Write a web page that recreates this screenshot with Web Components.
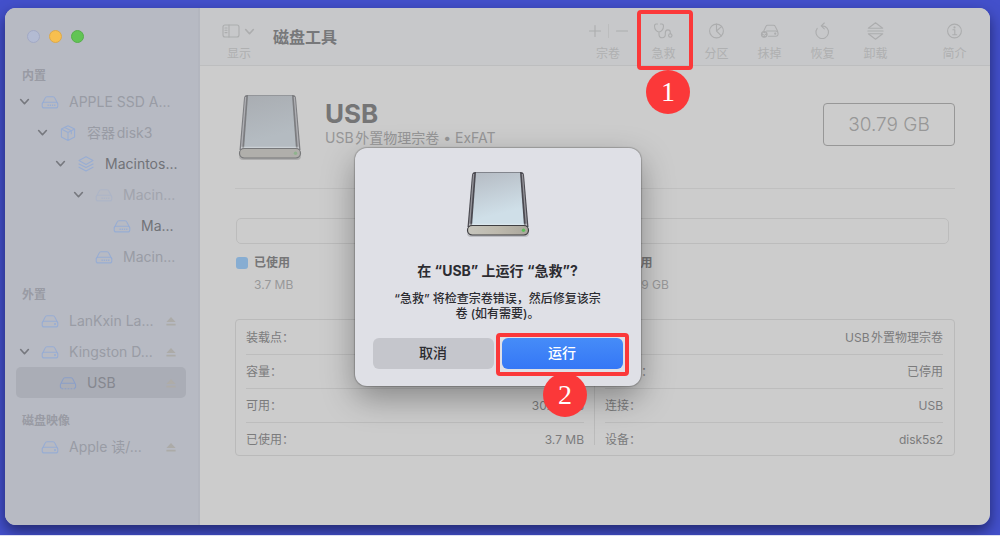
<!DOCTYPE html>
<html lang="zh-CN">
<head>
<meta charset="utf-8">
<title>磁盘工具</title>
<style>
  html, body { margin: 0; }
  body {
    box-sizing: border-box;
    min-height: 100vh;
    padding: 8px 10px 10px 5px;
    border-bottom: 1px solid #dcdff2;
    background: #4350cb;
    overflow: hidden;
    color: #7b7b7c;
    font: 12px/16px Inter, "Noto Sans CJK SC", sans-serif;
    text-autospace: normal;
  }
</style>
</head>
<body>
<disk-utility></disk-utility>

<script>
// Registers an element; {{name}} in its markup is filled from the host's attribute.
const define = (name, html, setup) => {
  customElements.define(name, class extends HTMLElement {
    connectedCallback() {
      if (this.shadowRoot) return;
      const template = document.createElement('template');
      template.innerHTML = html.replace(/\{\{(\w+)\}\}/g, (_, key) => this.getAttribute(key) || '');
      const root = this.attachShadow({ mode: 'open' });
      root.append(template.content);
      if (setup) setup(this, root);
    }
  });
};

const DRIVE = '<path d="M1.4 8.6 4.2 2.9Q4.700 1.700 6 1.700h6q1.300 0 1.800 1.200l2.800 5.700"/><rect x="1.200" y="7.300" width="15.600" height="5.600" rx="2"/>';
const ICONS = {
  chevron: ['0 0 10 10', '<path d="M1.500 3.200 5 7l3.500-3.800"/>'],
  internal: ['0 0 18 14', DRIVE + '<path d="M6.500 10.200h8" stroke-width="1.400" stroke-linecap="butt" stroke-dasharray="1.300 .9"/>'],
  external: ['0 0 18 14', DRIVE + '<circle cx="14" cy="10.100" r=".5"/>'],
  dotted: ['0 0 18 14', '<path d="M1.400 8.600 4.200 2.900Q4.700 1.700 6 1.700h6q1.300 0 1.800 1.200l2.800 5.700v2.400q0 1-1 1M1.400 8.600v2.400q0 1 1 1M2 7.300h14"/><path d="M3 12.700h12.500" stroke-dasharray="1 2"/>'],
  box: ['0 0 18 18', '<path d="M9 1.700 15.600 5v8L9 16.400 2.400 13V5zM2.400 5 9 8.400 15.600 5M9 8.400v8M5.700 3.400l6.600 3.300v3"/>'],
  layers: ['0 0 18 18', '<path d="M9 1.800 16 5.600 9 9.400 2 5.600zM2 8.900l7 3.700 7-3.700M2 12.200l7 3.700 7-3.700"/>'],
  eject: ['0 0 12 12', '<path d="M6 2 10.600 7H1.400zM1.400 8.800h9.200v1.600H1.400z" fill="currentColor" stroke="none"/>'],
  sidebar: ['0 0 20 16', '<rect x="2" y="2" width="16" height="12" rx="2"/><path d="M8 2v12M4 5h2M4 7.300h2M4 9.600h2"/>'],
  plus: ['0 0 14 14', '<path d="M7 1.500v11M1.500 7h11"/>'],
  minus: ['0 0 14 14', '<path d="M1.500 7h11"/>'],
  stethoscope: ['0 0 20 18', '<path d="M4 2H2.600Q1 2 1 4.200C1 7.800 3.600 10 5.500 10S10 7.800 10 4.200Q10 2 8.400 2H7M5.500 10v2.200Q5.500 15.800 8.600 15.800T11.800 12.600V11Q11.800 7.900 14.300 7.900T16.800 10.400V11.800"/><circle cx="16.800" cy="13.500" r="1.700"/>'],
  pie: ['0 0 18 18', '<circle cx="9" cy="9" r="6.900"/><path d="M9 2.100V9l4.800 4.800M9 9l5.200-4.600"/>'],
  erase: ['0 0 22 18', '<path d="M5 9 7.200 4.200Q7.800 3 9 3h6.200q1.300 0 1.800 1.200l2.600 5M8 9h9.500q2.500 0 2.500 2.800T17.500 14.500H10"/><circle cx="17" cy="11.800" r=".6"/><circle cx="5.500" cy="12.500" r="3" fill="currentColor"/><path d="m4.300 11.300 2.400 2.400m0-2.400-2.400 2.400" stroke="#c7c8ca"/>'],
  restore: ['0 0 18 18', '<path d="M3.700 6.400A6.300 6.300 0 1 0 9 3.900H8M10.800 1 7.700 3.900l3.100 3"/>'],
  unmount: ['0 0 18 18', '<path d="M1.800 6.200 9 .800l7.200 5.400zM1.400 9h15.200M1.800 11.800 9 17.200l7.200-5.400z"/>'],
  info: ['0 0 18 18', '<circle cx="9" cy="9" r="6.900"/><path d="M7.400 7.800H9.300v4.700M7.200 12.700h4"/><circle cx="9" cy="5.400" r=".5" fill="currentColor"/>']
};

define('ui-icon', `
  <style>
    :host { display: block; }
    svg { display: block; width: 100%; height: 100%; fill: none; stroke: currentColor; stroke-width: 1.1; stroke-linecap: round; stroke-linejoin: round; }
    :host([heavy]) svg { stroke-width: 1.5; }
  </style><svg aria-hidden="true"></svg>`, (host, root) => {
  const [box, shapes] = ICONS[host.getAttribute('name')];
  const svg = root.querySelector('svg');
  svg.setAttribute('viewBox', box);
  svg.innerHTML = shapes;
});

define('drive-picture', `
  <style>
    :host { display: block; width: 68px; height: 70px; }
    :host([dim]) { --body-a: #a9adb2; --body-b: #b4bbc1; --edge: #7c7d80; --face: #b0afab; --rim: #77787a; --lamp: #8fb38d; }
    svg { display: block; width: 100%; height: 100%; }
  </style>
  <svg viewBox="0 0 68 70" aria-hidden="true">
    <defs>
      <linearGradient id="top" x1="0" y1="0" x2=".25" y2="1">
        <stop offset="0" style="stop-color:var(--body-a,#b5bbc3)"/><stop offset=".85" style="stop-color:var(--body-b,#cfdfe8)"/>
      </linearGradient>
      <linearGradient id="face" x1="0" x2="1">
        <stop offset="0" style="stop-color:var(--face,#c6c5bd)"/><stop offset=".5" style="stop-color:var(--face,#bdb9ad)"/><stop offset="1" style="stop-color:var(--face,#aaa69c)"/>
      </linearGradient>
    </defs>
    <rect x="3" y="59" width="62" height="9" rx="4" fill="#000" opacity=".15"/>
    <path d="M8 6Q8.500 3 11 3H57Q59.500 3 60 6L64.500 58H3.500z" style="fill:var(--edge,#4a4950)"/>
    <path d="M9 5h1.300L6.200 57H4.800z" fill="#dfe0e3" opacity=".5"/>
    <path d="M59 5h-1.300L61.800 57h1.400z" fill="#dfe0e3" opacity=".5"/>
    <path d="M12 3.500H56L60 57H8z" fill="url(#top)"/>
    <path d="M5 55.300H63" stroke="#eef3f6" stroke-width="1" opacity=".5"/>
    <rect x="3.500" y="56.500" width="61" height="9.500" rx="4.700" fill="url(#face)" style="stroke:var(--rim,#3f3f42)" stroke-width="1.200"/>
    <circle cx="59.500" cy="61.300" r="1.700" style="fill:var(--lamp,#5cc05a)"/>
  </svg>`);

define('step-mark', `
  <style>
    :host { position: absolute; z-index: 2; display: block; pointer-events: none; }
    .frame { box-sizing: border-box; height: 100%; border: 4px solid #fb3839; border-radius: 4px; }
    .number {
      position: absolute; top: 100%; left: 50%; width: 44px; height: 44px; margin: var(--badge-gap, 0) 0 0 -19px;
      border-radius: 50%; background: #fb3839; color: #fff;
      font: 28px/44px "Liberation Serif", serif; text-align: center;
    }
  </style>
  <div class="frame"></div><div class="number"><slot></slot></div>`);

define('tree-item', `
  <style>
    :host { display: block; }
    .row {
      box-sizing: border-box; display: flex; align-items: center; height: 31px; padding: 0 9px 0 calc(var(--level, 0) * 18px);
      border-radius: 5px; color: #999ca5;
    }
    :host([active]) .row { color: #717378; }
    :host([faint]) .kind { color: #adb5c7; }
    :host([faint]) .row { color: #a1a4ad; }
    :host([selected]) .row { background: #aaadb6; color: #85878f; }
    :host([selected]) .kind { color: #8b9fc8; }
    .fold { width: 16px; display: flex; justify-content: center; color: #76787e; }
    .fold ui-icon { width: 11px; height: 11px; }
    button { all: unset; display: flex; align-items: center; }
    .name { flex: 1; min-width: 0; gap: 10px; margin-left: 9px; font-size: 14px; line-height: 20px; white-space: nowrap; }
    .kind { flex: none; width: 18px; height: 18px; color: #98add3; }
    .eject ui-icon { width: 12px; height: 12px; color: #acaba8; }
    :host(:not([open])) .fold ui-icon, :host(:not([ejectable])) .eject { display: none; }
    :host([selected]) .eject ui-icon { color: #aeaca8; }
  </style>
  <div class="row">
    <span class="fold"><ui-icon name="chevron" heavy></ui-icon></span>
    <button class="name"><ui-icon class="kind" name="{{icon}}"></ui-icon><slot></slot></button>
    <button class="eject" aria-label="推出"><ui-icon name="eject"></ui-icon></button>
  </div>`, host => host.style.setProperty('--level', host.getAttribute('level') || 0));

define('tree-section', `
  <style>
    :host { display: block; }
    h2 { margin: 0 0 1px 6px; font-size: 12px; line-height: 18px; font-weight: 700; color: #999ba4; }
  </style>
  <h2>{{heading}}</h2><slot></slot>`);

define('side-bar', `
  <style>
    :host { display: block; box-sizing: border-box; width: 195px; padding: 22px 12px 22px 11px; background: #b7bac3; border-right: 2px solid #b3b6bf; }
    .lights { display: flex; gap: 9px; margin: 0 0 24px 11px; }
    .lights button { box-sizing: border-box; width: 13px; height: 13px; padding: 0; border: 1px solid #a2a9c5; border-radius: 50%; background: #b3bbd3; }
    .lights .min { background: #f7bf4f; border-color: #dca94c; }
    .lights .max { background: #61c454; border-color: #56ae4c; }
    nav { display: flex; flex-direction: column; gap: 14px; }
  </style>
  <div class="lights"><button aria-label="关闭"></button><button class="min" aria-label="最小化"></button><button class="max" aria-label="缩放"></button></div>
  <nav>
    <tree-section heading="内置">
      <tree-item icon="internal" open>APPLE SSD A...</tree-item>
      <tree-item icon="box" level="1" open>容器disk3</tree-item>
      <tree-item icon="layers" level="2" open active>Macintos...</tree-item>
      <tree-item icon="internal" level="3" open faint>Macin...</tree-item>
      <tree-item icon="internal" level="4" active>Ma...</tree-item>
      <tree-item icon="internal" level="3">Macin...</tree-item>
    </tree-section>
    <tree-section heading="外置">
      <tree-item icon="external" ejectable>LanKxin La...</tree-item>
      <tree-item icon="external" open ejectable>Kingston D...</tree-item>
      <tree-item icon="dotted" level="1" selected ejectable>USB</tree-item>
    </tree-section>
    <tree-section heading="磁盘映像">
      <tree-item icon="external" ejectable>Apple 读/...</tree-item>
    </tree-section>
  </nav>`);

define('tool-item', `
  <style>
    :host { position: relative; display: flex; flex-direction: column; align-items: center; width: 53px; color: #acadae; }
    button { all: unset; display: flex; flex-direction: column; align-items: center; gap: 5px; }
    ui-icon { width: 21px; height: 18px; }
    .label { line-height: 18px; color: #afb0b1; }
  </style>
  <button><ui-icon name="{{icon}}"></ui-icon><span class="label">{{label}}</span></button><slot></slot>`);

define('tool-bar', `
  <style>
    :host { display: flex; align-items: flex-start; box-sizing: border-box; height: 58px; padding: 14px 9px 0 21px; background: #c7c8ca; border-bottom: 1px solid #bdbebf; color: #acadae; }
    button { all: unset; }
    .view { display: grid; grid-template-columns: 20px 11px; column-gap: 3px; row-gap: 5px; align-items: center; }
    .view ui-icon { height: 18px; }
    .view .arrow { height: 11px; }
    .view span { margin-left: 6px; line-height: 18px; white-space: nowrap; width: 24px; color: #afb0b1; }
    h1 { margin: 3px 0 0 18px; font-size: 16px; line-height: 24px; font-weight: 700; color: #77787a; }
    .tools { display: flex; margin-left: auto; }
    .volume { display: grid; grid-template-columns: 14px 1px 14px; justify-content: center; align-items: center; gap: 5px 6px; width: 58px; }
    .volume ui-icon { width: 14px; height: 18px; }
    .volume i { height: 14px; background: #bcbdbe; }
    .volume .label { grid-column: 1 / -1; text-align: center; line-height: 18px; color: #afb0b1; }
    .last { margin-left: 26px; }
    step-mark { top: -12px; left: 0; right: -3px; height: 60px; }
  </style>
  <button class="view"><ui-icon name="sidebar"></ui-icon><ui-icon class="arrow" name="chevron" heavy></ui-icon><span>显示</span></button>
  <h1>磁盘工具</h1>
  <div class="tools">
    <div class="volume"><button aria-label="添加宗卷"><ui-icon name="plus"></ui-icon></button><i></i><button aria-label="删除宗卷"><ui-icon name="minus"></ui-icon></button><span class="label">宗卷</span></div>
    <tool-item icon="stethoscope" label="急救"><step-mark>1</step-mark></tool-item>
    <tool-item icon="pie" label="分区"></tool-item>
    <tool-item icon="erase" label="抹掉"></tool-item>
    <tool-item icon="restore" label="恢复"></tool-item>
    <tool-item icon="unmount" label="卸载"></tool-item>
    <tool-item class="last" icon="info" label="简介"></tool-item>
  </div>`);

define('usage-key', `
  <style>
    :host { display: grid; grid-template-columns: 12px 1fr; column-gap: 6px; row-gap: 6px; align-items: center; }
    i { width: 12px; height: 12px; border-radius: 3px; background: var(--swatch); }
    b { font-weight: 700; color: #767677; }
    .size { grid-column: 2; color: #989899; }
  </style>
  <i></i><b>{{label}}</b><span class="size"><slot></slot></span>`);

define('info-grid', `
  <style>
    :host { display: flex; border: 1px solid #bababa; border-radius: 4px; padding: 0 11px 0 10px; }
    table { flex: 1; border-collapse: collapse; }
    .rule { width: 1px; margin: 10px; background: #bbb; }
    th, td { box-sizing: border-box; height: 34px; padding: 2px 0 0; border-bottom: 1px solid #bdbdbd; font-weight: 400; color: #7b7b7c; text-align: left; }
    td { text-align: right; }
    tr:last-child > * { border: 0; height: 33px; }
  </style>
  <table>
    <tr><th scope="row">装载点：</th><td>未装载</td></tr>
    <tr><th scope="row">容量：</th><td>30.79 GB</td></tr>
    <tr><th scope="row">可用：</th><td>30.79 GB</td></tr>
    <tr><th scope="row">已使用：</th><td>3.7 MB</td></tr>
  </table>
  <div class="rule"></div>
  <table>
    <tr><th scope="row">类型：</th><td>USB外置物理宗卷</td></tr>
    <tr><th scope="row">所有者：</th><td>已停用</td></tr>
    <tr><th scope="row">连接：</th><td>USB</td></tr>
    <tr><th scope="row">设备：</th><td>disk5s2</td></tr>
  </table>`);

define('volume-view', `
  <style>
    :host { display: block; padding: 26px 35px 24px; }
    header { display: flex; align-items: flex-start; padding: 0 0 26px 1px; border-bottom: 1px solid #c0c0c0; }
    h2 { margin: 7px 0 0; font-size: 26px; line-height: 30px; font-weight: 700; color: #757576; }
    p { margin: 0; font-size: 14px; line-height: 18px; color: #969697; }
    .name { margin-left: 21px; flex: 1; }
    .capacity { box-sizing: border-box; width: 132px; margin-top: 11px; border: 1px solid #979797; border-radius: 4px; font-size: 19px; line-height: 41px; text-align: center; color: #979797; font-weight: 300; }
    .bar { height: 24px; margin: 29px 6px 0 1px; border: 1px solid #bcbcbc; border-radius: 5px; }
    .keys { display: grid; grid-template-columns: 1fr 1fr; gap: 12px; margin: 11px 6px 26px 1px; }
  </style>
  <header>
    <drive-picture dim></drive-picture>
    <div class="name"><h2>USB</h2><p>USB外置物理宗卷 • ExFAT</p></div>
    <div class="capacity">30.79 GB</div>
  </header>
  <div class="bar" role="img" aria-label="已使用 3.7 MB"></div>
  <div class="keys">
    <usage-key label="已使用" style="--swatch:#87add2">3.7 MB</usage-key>
    <usage-key label="未使用" style="--swatch:#d6d6d6">30.79 GB</usage-key>
  </div>
  <info-grid></info-grid>`);

define('confirm-dialog', `
  <style>
    :host {
      display: block; box-sizing: border-box; width: 286px; padding: 21px 18px 17px; border-radius: 12px; background: #dfe0e6;
      box-shadow: 0 0 1px 1px rgba(0,0,0,.2), 0 12px 32px rgba(0,0,0,.34); color: #2c2c31; text-align: center;
    }
    drive-picture { margin: 0 auto 22px; }
    h2 { margin: 0 0 10px; font-size: 14px; line-height: 20px; font-weight: 700; }
    p { margin: 0 0 17px; line-height: 15px; font-weight: 500; }
    .actions { display: flex; gap: 8px; }
    .action { position: relative; flex: 1; }
    button { display: block; width: 100%; height: 31px; padding: 0; border: 0; border-radius: 6px; background: #c5c6cc; color: inherit; font: 500 14px/20px Inter, "Noto Sans CJK SC", sans-serif; }
    .run { background: linear-gradient(#468cf8, #3577f6); color: #fff; }
    step-mark { inset: -5px -6px -7px; --badge-gap: -3px; }
  </style>
  <drive-picture></drive-picture>
  <h2>在 “USB” 上运行 “急救”?</h2>
  <p>“急救” 将检查宗卷错误，然后修复该宗<br>卷 (如有需要)。</p>
  <div class="actions">
    <div class="action"><button>取消</button></div>
    <div class="action"><button class="run">运行</button><step-mark>2</step-mark></div>
  </div>`);

define('disk-utility', `
  <style>
    :host { position: relative; display: block; border-radius: 11px; box-shadow: 0 6px 14px rgba(0,0,20,.5); }
    .frame { display: grid; grid-template-columns: 195px 1fr; min-height: calc(100vh - 19px); border-radius: 11px; overflow: hidden; background: #ccc; }
    .sheet { position: absolute; inset: 0; display: grid; place-items: center; }
  </style>
  <div class="frame"><side-bar></side-bar><main><tool-bar></tool-bar><volume-view></volume-view></main></div>
  <div class="sheet"><confirm-dialog role="dialog" aria-modal="true"></confirm-dialog></div>`);
</script>
</body>
</html>
